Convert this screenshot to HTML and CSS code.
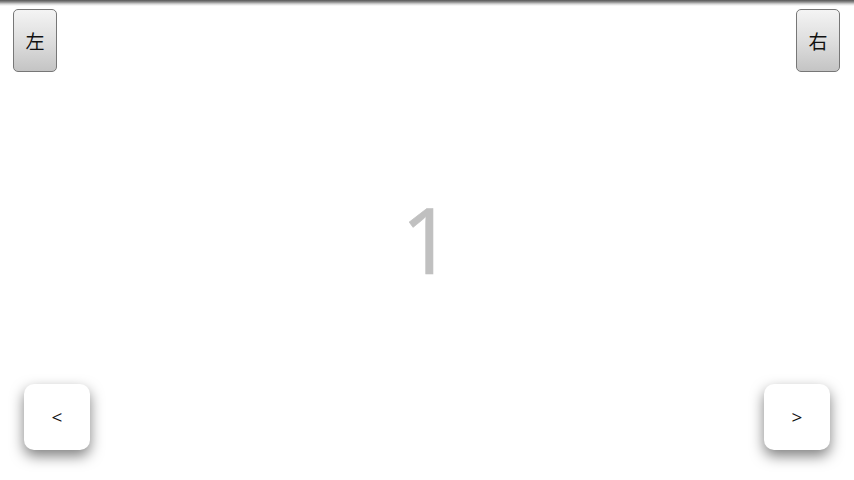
FILE: index.html
```html
<!DOCTYPE html>
<html lang="zh">
<head>
    <meta charset="UTF-8">
    <meta name="viewport" content="width=device-width, initial-scale=1.0">
    <title>Pager</title>
    <link rel="stylesheet" href="styles.css">
</head>
<body>
    <div id="page">
        <div class="topbar"></div>
        <div class="toprow">
            <button class="side">左</button>
            <button class="side">右</button>
        </div>
        <div class="stage">
            <span class="num">1</span>
        </div>
        <div class="bottomrow">
            <button class="nav">&lt;</button>
            <button class="nav">&gt;</button>
        </div>
    </div>
</body>
</html>
```

FILE: styles.css
```css
* { margin: 0; padding: 0; box-sizing: border-box; }
body {
    width: 854px;
    height: 480px;
    background: #fff;
    font-family: "Open Sans", "Noto Sans CJK SC", sans-serif;
    overflow: hidden;
}
#page {
    height: 480px;
    display: flex;
    flex-direction: column;
}
.topbar {
    height: 6px;
    background: linear-gradient(#555 0, #8a8a8a 2px, #d6d6d6 4px, #fff 6px);
}
.toprow {
    display: flex;
    justify-content: space-between;
    padding: 3px 14px 0 13px;
}
.side {
    width: 44px;
    height: 63px;
    border: 1px solid #777;
    border-radius: 5px;
    background: linear-gradient(#f4f4f4, #dcdcdc 55%, #c4c4c4);
    font-family: "Noto Sans CJK SC", sans-serif;
    font-size: 19px;
    color: #111;
}
.stage {
    flex: 1;
    display: flex;
    justify-content: center;
    align-items: center;
    padding-top: 23px;
}
.num {
    font-size: 91px;
    line-height: 1;
    color: #c0c0c0;
    -webkit-text-stroke: 0.6px #c0c0c0;
}
.bottomrow {
    display: flex;
    justify-content: space-between;
    padding: 0 24px 30px;
}
.nav {
    width: 66px;
    height: 66px;
    border: none;
    border-radius: 10px;
    background: #fff;
    box-shadow: 0 6px 14px rgba(0,0,0,0.5);
    font-family: "Open Sans", sans-serif;
    font-size: 19px;
    color: #111;
}
```
